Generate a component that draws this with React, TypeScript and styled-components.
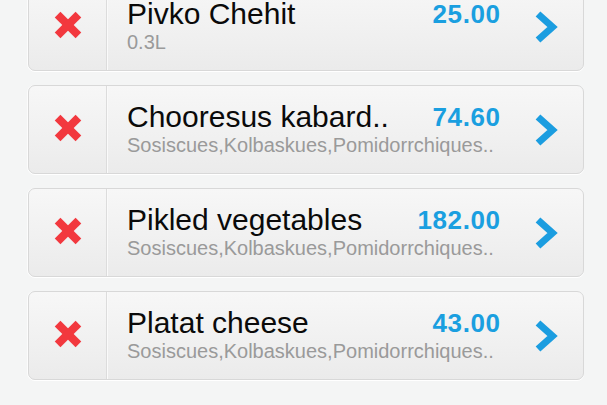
import React from "react";
import styled, { createGlobalStyle } from "styled-components";

const GlobalStyle = createGlobalStyle`
  html, body {
    margin: 0;
    padding: 0;
    background: #f4f5f5;
    font-family: "Liberation Sans", Arial, Helvetica, sans-serif;
    overflow: hidden;
  }
`;

const Page = styled.div`
  width: 607px;
  height: 405px;
  background: #f4f5f5;
  overflow: hidden;
`;

const List = styled.ul`
  list-style: none;
  margin: -18px 0 0 0;
  padding: 0 23px 0 28px;
  display: flex;
  flex-direction: column;
  gap: 14px;
`;

const Card = styled.li`
  box-sizing: border-box;
  height: 89px;
  display: flex;
  border: 1px solid #d8d8d8;
  border-radius: 7px;
  background: linear-gradient(to bottom, #f7f7f7 0%, #f0f0f0 60%, #ebebeb 100%);
  box-shadow: 0 1px 0 #ffffff, -1px 0 0 rgba(255, 255, 255, 0.7);
`;

const DeleteCell = styled.div`
  width: 78px;
  flex: none;
  display: flex;
  align-items: center;
  justify-content: center;
  padding-bottom: 4px;
  box-sizing: border-box;
  border-right: 1px solid #dcdcdc;
  box-shadow: 1px 0 0 #fafafa;
`;

const Info = styled.div`
  flex: 1;
  min-width: 0;
  padding: 14px 0 0 20px;
  display: flex;
  flex-direction: column;
`;

const TopRow = styled.div`
  display: flex;
  align-items: flex-start;
  justify-content: space-between;
`;

const Title = styled.div`
  font-size: 30px;
  line-height: 34px;
  color: #0a0a0a;
  white-space: nowrap;
`;

const Price = styled.div`
  font-size: 26px;
  line-height: 34px;
  font-weight: bold;
  color: #1a9fe0;
  letter-spacing: 0.6px;
  margin-right: -0.6px;
  white-space: nowrap;
`;

const Sub = styled.div`
  font-size: 20px;
  line-height: 22px;
  color: #9a9a9a;
  white-space: nowrap;
`;

const ArrowCell = styled.div`
  width: 83px;
  flex: none;
  box-sizing: border-box;
  padding-left: 34px;
  display: flex;
  align-items: center;
`;

const CrossIcon = () => (
  <svg width="28" height="28" viewBox="0 0 28 28">
    <g stroke="#f2383e" strokeWidth="8" strokeLinecap="butt">
      <line x1="3.6" y1="3.6" x2="24.4" y2="24.4" />
      <line x1="24.4" y1="3.6" x2="3.6" y2="24.4" />
    </g>
  </svg>
);

const ChevronIcon = () => (
  <svg width="24" height="34" viewBox="0 0 24 34">
    <polyline
      points="4,4 18.5,17 4,30"
      fill="none"
      stroke="#1b9de0"
      strokeWidth="7"
      strokeLinecap="butt"
      strokeLinejoin="miter"
    />
  </svg>
);

type Item = { title: string; sub: string; price: string };

const items: Item[] = [
  { title: "Pivko Chehit", sub: "0.3L", price: "25.00" },
  { title: "Chooresus kabard..", sub: "Sosiscues,Kolbaskues,Pomidorrchiques..", price: "74.60" },
  { title: "Pikled vegetables", sub: "Sosiscues,Kolbaskues,Pomidorrchiques..", price: "182.00" },
  { title: "Platat cheese", sub: "Sosiscues,Kolbaskues,Pomidorrchiques..", price: "43.00" },
];

export default function App() {
  return (
    <Page>
      <GlobalStyle />
      <List>
        {items.map((it) => (
          <Card key={it.title}>
            <DeleteCell>
              <CrossIcon />
            </DeleteCell>
            <Info>
              <TopRow>
                <Title>{it.title}</Title>
                <Price>{it.price}</Price>
              </TopRow>
              <Sub>{it.sub}</Sub>
            </Info>
            <ArrowCell>
              <ChevronIcon />
            </ArrowCell>
          </Card>
        ))}
      </List>
    </Page>
  );
}
